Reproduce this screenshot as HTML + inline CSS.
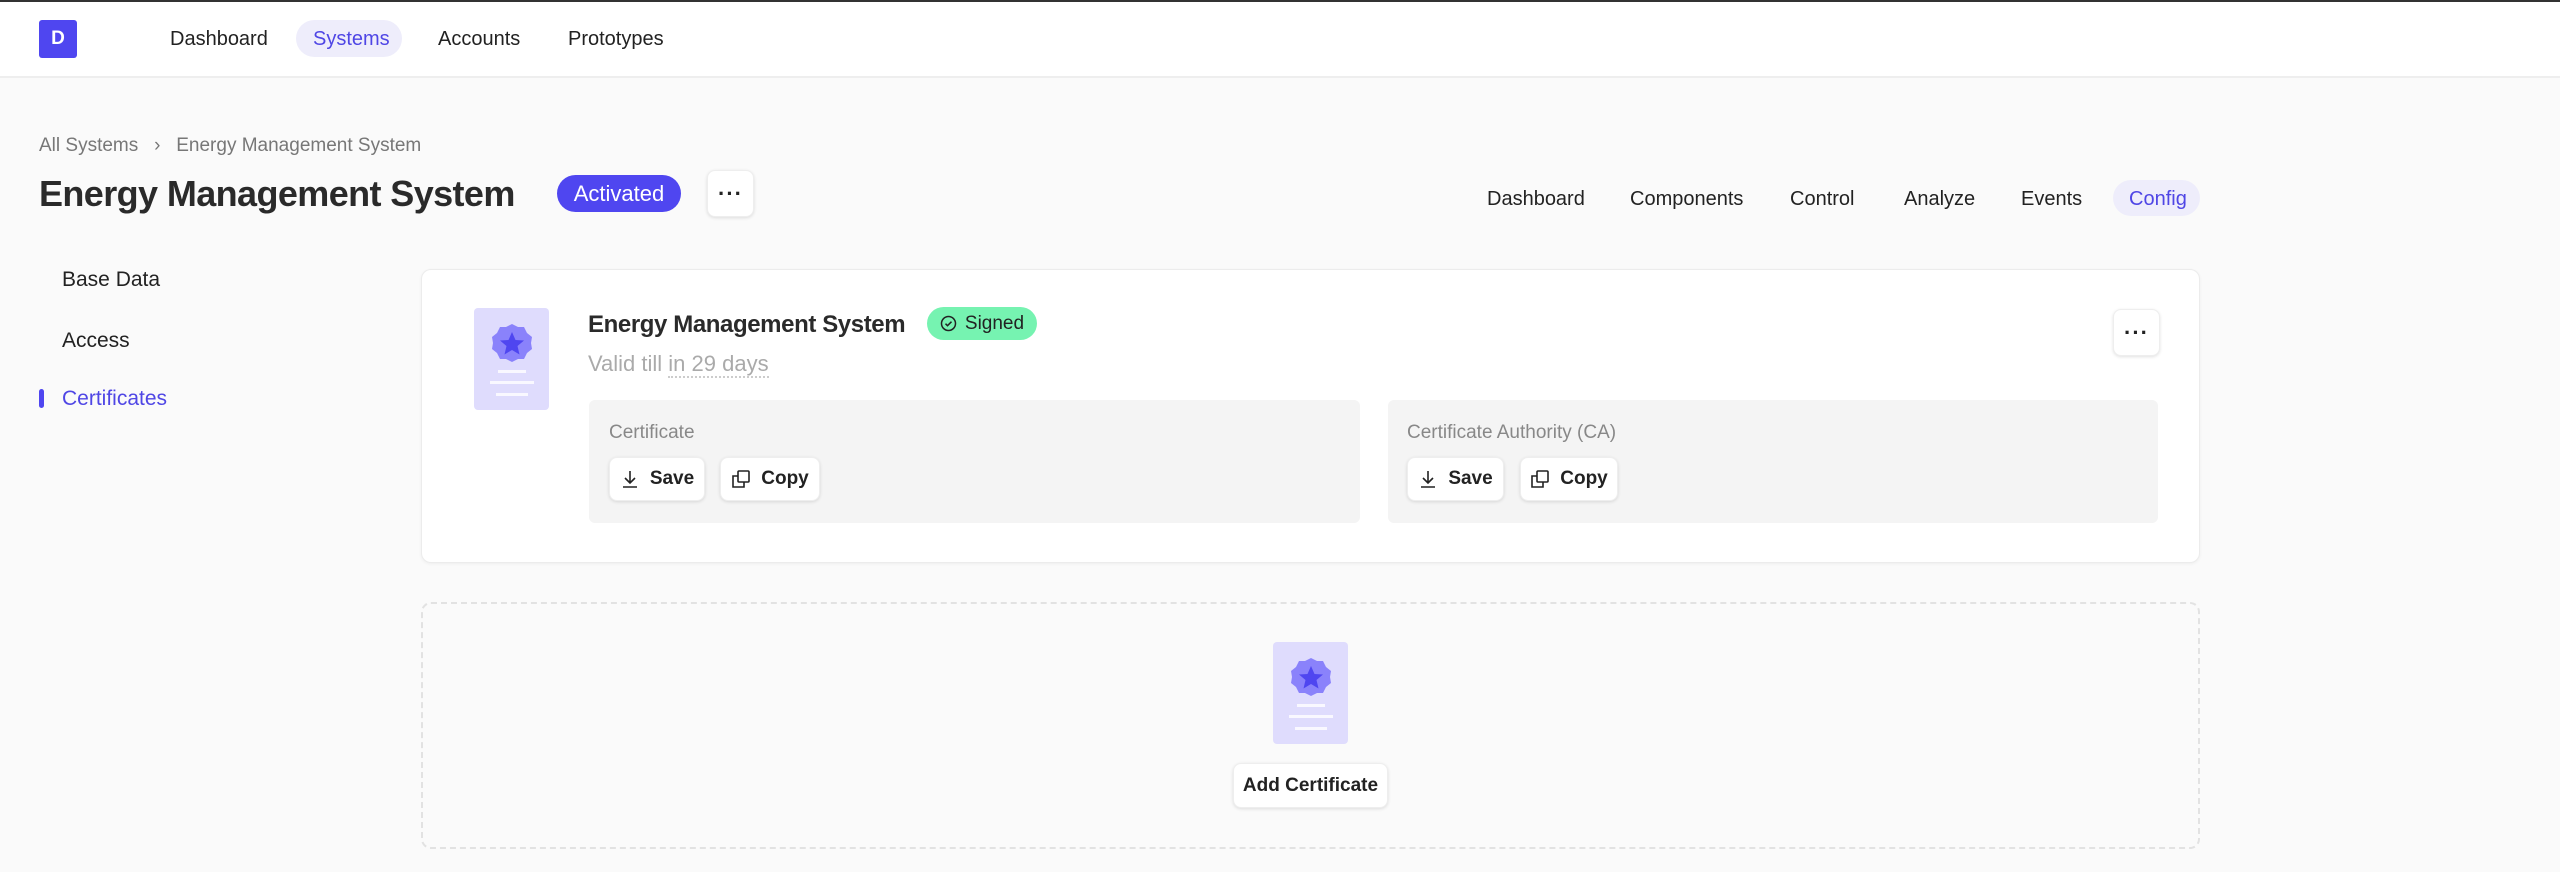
<!DOCTYPE html>
<html><head><meta charset="utf-8"><style>
*{box-sizing:border-box;margin:0;padding:0}
body{width:2560px;height:872px;background:#fafafa;font-family:"Liberation Sans",Arial,sans-serif;color:#222;position:relative;overflow:hidden}
.a{position:absolute}
.nav{left:0;top:0;width:2560px;height:78px;background:#fff;border-top:2px solid #333;border-bottom:2px solid #eee}
.ni{font-size:20px;top:28px;color:#222}
.pill{border-radius:20px;background:#eeedfb;color:#4f46e5}
.btn{background:#fff;border-radius:8px;box-shadow:0 1px 3px rgba(0,0,0,.12);border:1px solid #eee;display:flex;align-items:center;justify-content:center;font-weight:bold;font-size:19px;color:#222;gap:10px}
.dots{font-size:22px;font-weight:bold;letter-spacing:1px;line-height:10px}
.panel{background:#f4f4f4;border-radius:6px}
</style></head><body>
<div class="a nav"></div>
<div class="a" style="left:39px;top:20px;width:38px;height:38px;background:#4f46f0;border-radius:3px;color:#fff;font-size:19px;font-weight:bold;text-align:center;line-height:38px">D</div>
<div class="a ni" style="left:170px">Dashboard</div>
<div class="a pill" style="left:296px;top:20px;width:106px;height:37px"></div>
<div class="a ni" style="left:313px;color:#4f46e5">Systems</div>
<div class="a ni" style="left:438px">Accounts</div>
<div class="a ni" style="left:568px">Prototypes</div>

<div class="a" style="left:39px;top:135px;font-size:19px;color:#777">All Systems &nbsp;&nbsp;›&nbsp;&nbsp; Energy Management System</div>
<div class="a" style="left:39px;top:173px;font-size:36px;letter-spacing:-0.6px;font-weight:bold;color:#2a2a2a">Energy Management System</div>
<div class="a" style="left:557px;top:175px;width:124px;height:37px;border-radius:19px;background:#4f46f0;color:#fff;font-size:22px;text-align:center;line-height:37px">Activated</div>
<div class="a btn" style="left:707px;top:170px;width:47px;height:47px"><span class="dots">···</span></div>

<div class="a ni" style="left:1487px;top:188px">Dashboard</div>
<div class="a ni" style="left:1630px;top:188px">Components</div>
<div class="a ni" style="left:1790px;top:188px">Control</div>
<div class="a ni" style="left:1904px;top:188px">Analyze</div>
<div class="a ni" style="left:2021px;top:188px">Events</div>
<div class="a pill" style="left:2113px;top:180px;width:87px;height:36px"></div>
<div class="a ni" style="left:2129px;top:188px;color:#4f46e5">Config</div>

<div class="a" style="left:62px;top:268px;font-size:21px">Base Data</div>
<div class="a" style="left:62px;top:329px;font-size:21px">Access</div>
<div class="a" style="left:39px;top:389px;width:5px;height:19px;border-radius:3px;background:#4f46f0"></div>
<div class="a" style="left:62px;top:387px;font-size:21px;color:#4f46e5">Certificates</div>

<div class="a" style="left:421px;top:269px;width:1779px;height:294px;background:#fff;border:1px solid #ececec;border-radius:10px;box-shadow:0 1px 3px rgba(0,0,0,.05)"></div>
<svg class="a" style="left:474px;top:308px" width="75" height="102" viewBox="0 0 75 102"><rect width="75" height="102" rx="4" fill="#dfdcfd"/><path d="M38 16l6 3 6 0 3 6 5 4-1 6 1 6-5 4-3 6-6 0-6 3-6-3-6 0-3-6-5-4 1-6-1-6 5-4 3-6 6 0z" fill="#8a82fb"/><path d="M38 24l3.5 8 8.5.5-6.5 5.5 2 8.5-7.5-4.5-7.5 4.5 2-8.5-6.5-5.5 8.5-.5z" fill="#4f46f0"/><rect x="24" y="62" width="28" height="3" fill="#fff" opacity=".8"/><rect x="16" y="73" width="44" height="3" fill="#fff" opacity=".8"/><rect x="22" y="85" width="32" height="3" fill="#fff" opacity=".8"/></svg>
<div class="a" style="left:588px;top:311px;font-size:24px;letter-spacing:-0.4px;font-weight:bold;color:#2a2a2a">Energy Management System</div>
<div class="a" style="left:927px;top:307px;width:110px;height:33px;border-radius:17px;background:#76f3b1;font-size:19px;color:#222;display:flex;align-items:center;justify-content:center;gap:8px"><svg width="17" height="17" viewBox="0 0 17 17"><circle cx="8.5" cy="8.5" r="7" fill="none" stroke="#222" stroke-width="1.5"/><path d="M5.5 8.7l2 2 4-4" fill="none" stroke="#222" stroke-width="1.5"/></svg>Signed</div>
<div class="a" style="left:588px;top:351px;font-size:22px;color:#aaa">Valid till <span style="border-bottom:2px dotted #ccc">in 29 days</span></div>
<div class="a btn" style="left:2113px;top:309px;width:47px;height:47px"><span class="dots">···</span></div>

<div class="a panel" style="left:589px;top:400px;width:771px;height:123px"></div>
<div class="a panel" style="left:1388px;top:400px;width:770px;height:123px"></div>
<div class="a" style="left:609px;top:422px;font-size:19px;color:#888">Certificate</div>
<div class="a" style="left:1407px;top:422px;font-size:19px;color:#888">Certificate Authority (CA)</div>

<svg width="0" height="0" style="position:absolute"><defs>
<symbol id="dl" viewBox="0 0 20 20"><path d="M10 2v12M5 9l5 5 5-5M3 18h14" fill="none" stroke="#222" stroke-width="1.6"/></symbol>
<symbol id="cp" viewBox="0 0 20 20"><rect x="7" y="2" width="11" height="11" rx="1" fill="none" stroke="#222" stroke-width="1.6"/><path d="M7 7H2v11h11v-5" fill="none" stroke="#222" stroke-width="1.6"/></symbol>
</defs></svg>
<div class="a btn" style="left:609px;top:457px;width:96px;height:44px"><svg width="20" height="20"><use href="#dl"/></svg>Save</div>
<div class="a btn" style="left:720px;top:457px;width:100px;height:44px"><svg width="20" height="20"><use href="#cp"/></svg>Copy</div>
<div class="a btn" style="left:1407px;top:457px;width:97px;height:44px"><svg width="20" height="20"><use href="#dl"/></svg>Save</div>
<div class="a btn" style="left:1520px;top:457px;width:98px;height:44px"><svg width="20" height="20"><use href="#cp"/></svg>Copy</div>

<div class="a" style="left:421px;top:602px;width:1779px;height:247px;border:2px dashed #e2e2e2;border-radius:10px"></div>
<svg class="a" style="left:1273px;top:642px" width="75" height="102" viewBox="0 0 75 102"><rect width="75" height="102" rx="4" fill="#dfdcfd"/><path d="M38 16l6 3 6 0 3 6 5 4-1 6 1 6-5 4-3 6-6 0-6 3-6-3-6 0-3-6-5-4 1-6-1-6 5-4 3-6 6 0z" fill="#8a82fb"/><path d="M38 24l3.5 8 8.5.5-6.5 5.5 2 8.5-7.5-4.5-7.5 4.5 2-8.5-6.5-5.5 8.5-.5z" fill="#4f46f0"/><rect x="24" y="62" width="28" height="3" fill="#fff" opacity=".8"/><rect x="16" y="73" width="44" height="3" fill="#fff" opacity=".8"/><rect x="22" y="85" width="32" height="3" fill="#fff" opacity=".8"/></svg>
<div class="a btn" style="left:1233px;top:763px;width:155px;height:45px">Add Certificate</div>
</body></html>
